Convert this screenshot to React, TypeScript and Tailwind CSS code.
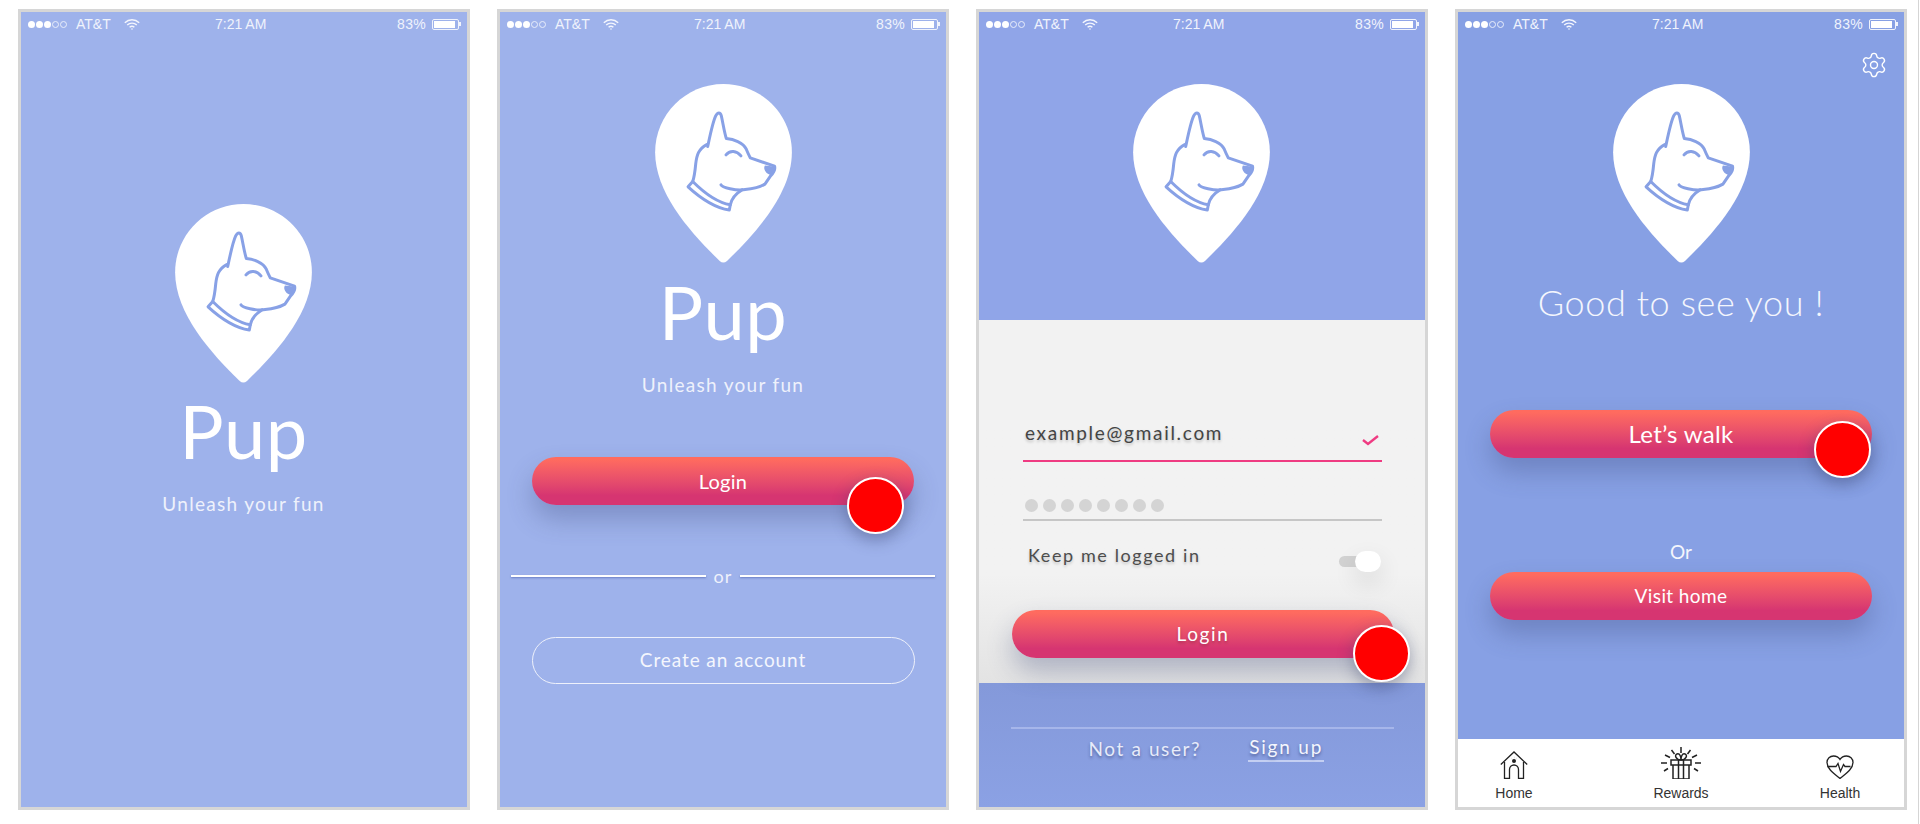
import React from "react";
import { Settings } from "lucide-react";

const Status = () => (
  <div className="flex h-6 shrink-0 items-center text-[14px] text-[#f0f3fc] font-['Liberation_Sans',sans-serif]">
    <div className="ml-[7px] flex w-[40px] gap-px">
      {[1, 1, 1, 0, 0].map((f, i) => (
        <span key={i} className={f ? "h-[7px] w-[7px] rounded-full bg-white" : "h-[7px] w-[7px] rounded-full border border-[#e8edfb]"} />
      ))}
    </div>
    <span className="ml-[8px] w-[48px]">AT&amp;T</span>
    <svg width="16" height="11" viewBox="0 0 16 11" fill="none" stroke="#f4f6fd" strokeWidth="1.4">
      <path d="M.8 3.7C5 -.3 11 -.3 15.2 3.7M3.2 6c2.7-2.5 6.9-2.5 9.6 0M5.6 8.3c1.4-1.2 3.4-1.2 4.8 0" />
      <circle cx="8" cy="10" r=".8" fill="#f4f6fd" stroke="none" />
    </svg>
    <span className="ml-[75px] w-[182px]">7:21 AM</span>
    <span className="w-[35px] tracking-[0.4px]">83%</span>
    <span className="flex h-[11px] w-[27px] items-center rounded-[2px] border border-[#f0f3fc] p-px">
      <span className="h-full w-[21px] bg-white" />
    </span>
    <span className="h-1 w-[2px] bg-[#f0f3fc]" />
  </div>
);

const Pin = ({ color }: { color: string }) => (
  <svg width="137" height="179" viewBox="0 0 411 538" className="shrink-0">
    <path fill="#fff" d="M205.5 0C319 0 411 92 411 205C411 330 300 450 216 532Q205 541 194 532C110 450 0 330 0 205C0 92 92 0 205.5 0Z" />
    <g fill="none" stroke={color} strokeWidth="9" strokeLinecap="round" strokeLinejoin="round">
      <path d="M158 188C165 155 173 115 182 96C188 84 196 84 199 96C204 118 208 145 214 164C235 166 265 175 274 196C278 206 282 214 286 222L359 247C362 258 355 268 347 276L330 301C305 316 280 316 262 318C245 320 202 312 198 303" />
      <path d="M155 182C130 195 125 215 122 240C120 262 118 278 113 293" />
      <path d="M213 213C225 198 245 200 258 216" />
      <path d="M262 318C245 328 230 345 226 363" />
      <path d="M113 293L99 309C135 342 180 372 223 379L226 363C190 357 150 330 113 293Z" />
    </g>
    <path fill={color} d="M330 245L362 249C364 262 352 276 343 272C332 268 324 254 330 245Z" />
  </svg>
);

const Cta = ({ label, cls, text }: { label: string; cls: string; text: string }) => (
  <div className={`flex h-[48px] w-[382px] items-center justify-center rounded-full bg-gradient-to-b from-[#ff6b5f] from-5% to-[#d63571] to-80% text-white shadow-[0_14px_26px_rgba(60,70,120,0.32)] ${cls} ${text}`}>
    {label}
  </div>
);

const Red = ({ cls }: { cls: string }) => (
  <div className={`absolute h-[57px] w-[57px] rounded-full border-2 border-white bg-[#ff0000] shadow-[0_6px_16px_rgba(50,60,100,0.4)] ${cls}`} />
);

const Phone = ({ cls, children }: { cls: string; children: React.ReactNode }) => (
  <div className={`relative flex h-[801px] w-[452px] shrink-0 flex-col overflow-visible border-[3px] border-[#d6d6d6] font-['Lato',sans-serif] ${cls}`}>
    {children}
  </div>
);

const App = () => (
  <div className="relative flex h-[824px] w-[1920px] items-start overflow-hidden bg-white pl-[18px] pt-[9px]">
    <Phone cls="bg-[#9eb2eb]">
      <Status />
      <div className="flex flex-col items-center pr-[1px]">
        <div className="mt-[168px]"><Pin color="#88a1e6" /></div>
        <div className="mt-[3px] text-[74px] font-normal leading-[90px] tracking-[0.5px] text-white">Pup</div>
        <div className="mt-[16px] text-[19px] font-normal leading-[24px] tracking-[1.3px] text-[#eef1fb]">Unleash your fun</div>
      </div>
    </Phone>

    <Phone cls="ml-[27px] bg-[#9eb2eb]">
      <Status />
      <div className="flex flex-col items-center">
        <div className="mt-[48px]"><Pin color="#88a1e6" /></div>
        <div className="mt-[4px] text-[74px] font-normal leading-[90px] tracking-[0.5px] text-white">Pup</div>
        <div className="mt-[16px] text-[19px] font-normal leading-[24px] tracking-[1.3px] text-[#eef1fb]">Unleash your fun</div>
        <div className="relative mt-[60px]">
          <Cta label="Login" cls="" text="text-[20px] tracking-[0.3px]" />
          <Red cls="right-[10px] top-[20px]" />
        </div>
        <div className="mt-[60px] flex w-[425px] items-center justify-between">
          <span className="h-[2px] w-[195px] bg-white shadow-[0_1px_2px_rgba(70,90,170,0.6)]" />
          <span className="text-[18px] leading-[22px] tracking-[1px] text-[#eef1fb]">or</span>
          <span className="h-[2px] w-[195px] bg-white shadow-[0_1px_2px_rgba(70,90,170,0.6)]" />
        </div>
        <div className="mt-[50px] flex h-[47px] w-[383px] items-center justify-center rounded-full border-[1.5px] border-[#eef1fb] text-[19px] tracking-[0.9px] text-[#f4f6fd]">
          Create an account
        </div>
      </div>
    </Phone>

    <Phone cls="ml-[27px] bg-[#8fa5e8]">
      <div className="flex h-[308px] shrink-0 flex-col bg-[#90a5e8]">
        <Status />
        <div className="flex flex-col items-center pr-[2px]">
          <div className="mt-[48px]"><Pin color="#88a1e6" /></div>
        </div>
      </div>
      <div className="relative flex h-[363px] shrink-0 flex-col bg-gradient-to-b from-[#f2f2f2] from-70% to-[#e3e3e3] pl-[44px]">
        <div className="mt-[101px] flex w-[359px] items-end justify-between border-b-2 border-[#ef3b82] pb-[15px] pr-[3px]">
          <span className="ml-[2px] text-[19px] leading-[24px] tracking-[1.7px] text-[#444] [text-shadow:0_2px_3px_rgba(0,0,0,0.22)]">example@gmail.com</span>
          <svg width="17" height="11" viewBox="0 0 17 11" fill="none" stroke="#ef3b82" strokeWidth="2.4" className="mb-[-1px]"><path d="M1 5l5 4 10-8" /></svg>
        </div>
        <div className="mt-[37px] flex w-[359px] gap-[5px] border-b-2 border-[#c6c6c6] pb-[7px] pl-[2px]">
          {[0, 1, 2, 3, 4, 5, 6, 7].map((i) => (
            <span key={i} className="h-[13px] w-[13px] rounded-full bg-[#d4d4d4]" />
          ))}
        </div>
        <div className="mt-[22px] flex w-[359px] items-start justify-between pl-[5px] pr-[1px]">
          <span className="text-[18px] leading-[24px] tracking-[1.6px] text-[#4d4d4d] [text-shadow:0_2px_3px_rgba(0,0,0,0.2)]">Keep me logged in</span>
          <div className="relative mt-[8px] h-[21px] w-[42px]">
            <span className="absolute left-0 top-[5px] h-[11px] w-[34px] rounded-full bg-[#d2d2d2]" />
            <span className="absolute right-0 top-0 h-[21px] w-[26px] rounded-full bg-white shadow-[0_10px_24px_rgba(0,0,0,0.12)]" />
          </div>
        </div>
        <div className="relative mt-[38px] ml-[-11px] w-[382px]">
          <Cta label="Login" cls="shadow-[0_12px_26px_rgba(0,0,0,0.22)]" text="text-[19px] tracking-[1.6px] [text-shadow:0_2px_3px_rgba(0,0,0,0.22)] text-[#fbe3e3]" />
          <Red cls="right-[-16px] top-[15px]" />
        </div>
      </div>
      <div className="flex flex-1 flex-col items-center bg-gradient-to-b from-[#8499da] to-[#8ba1e4]">
        <div className="mt-[44px] h-[2px] w-[383px] bg-[#a6b6ea]" />
        <div className="mt-[6px] flex w-[383px] items-start pl-[78px]">
          <span className="mt-[2px] text-[19px] leading-[24px] tracking-[1.6px] text-[#e7ebf9] [text-shadow:0_2px_3px_rgba(30,40,90,0.45)]">Not a user?</span>
          <span className="ml-[47px] border-b-2 border-[#c4cff2] px-[1px] pb-[1px] text-[19px] leading-[24px] tracking-[1.8px] text-[#f4f6fd] [text-shadow:0_2px_3px_rgba(30,40,90,0.5)]">Sign up</span>
        </div>
      </div>
    </Phone>

    <Phone cls="ml-[27px] bg-[#87a0e4]">
      <Status />
      <Settings size={28} strokeWidth={1.2} color="#fff" className="absolute right-[16px] top-[39px]" />
      <div className="flex flex-col items-center">
        <div className="mt-[48px]"><Pin color="#87a0e4" /></div>
        <div className="mt-[15px] text-[36px] font-light leading-[48px] tracking-[0.6px] text-[#f4f6fd]">Good to see you !</div>
        <div className="relative mt-[84px]">
          <Cta label="Let’s walk" cls="" text="text-[24px] tracking-[0.3px]" />
          <Red cls="right-[1px] top-[11px]" />
        </div>
        <div className="mt-[81px] text-[19px] leading-[26px] text-[#f4f6fd]">Or</div>
        <Cta label="Visit home" cls="mt-[7px]" text="text-[19px] tracking-[0.4px]" />
      </div>
      <div className="mt-auto flex h-[68px] items-start bg-white pl-[26px] pt-[8px] text-[14px] leading-[16px] text-[#333] font-['Liberation_Sans',sans-serif]">
        <div className="flex w-[60px] flex-col items-center gap-[6px]">
          <svg width="28" height="32" viewBox="0 0 28 32" fill="none" stroke="#222" strokeWidth="1.3">
            <path d="M.8 17.5L14 5l13.2 12.5" />
            <path d="M4.5 15v17h5v-9.5a4.5 4.5 0 0 1 9 0V32h5V15" />
            <path d="M4.5 31.4h5M18.5 31.4h5" />
            <circle cx="14" cy="14" r="2" fill="#222" stroke="none" />
            <path d="M11.5 11.5h.1M14 10.5h.1M16.5 11.5h.1" />
          </svg>
          <span>Home</span>
        </div>
        <div className="ml-[107px] flex w-[60px] flex-col items-center gap-[6px]">
          <svg width="40" height="32" viewBox="0 0 40 32" fill="none" stroke="#222" strokeWidth="1.5">
            <path d="M20 0v6M10.5 3l3 4M29.5 3l-3 4M4 8l5 2.5M36 8l-5 2.5M0 16h6M34 16h6M3 24l4-2.5M37 24l-4-2.5" />
            <path d="M10 13h20v5H10zM12 18v14h16V18M17.5 13v19M22.5 13v19" />
            <path d="M20 13c-5 0-7-5-4-6s4 3 4 6c0-3 1-7 4-6s1 6-4 6z" />
          </svg>
          <span>Rewards</span>
        </div>
        <div className="ml-[99px] flex w-[60px] flex-col items-center gap-[6px]">
          <svg width="28" height="32" viewBox="0 0 28 32" fill="none" stroke="#222" strokeWidth="1.3">
            <path d="M14 31.5C8.5 27 1 22 1 15.5C1 11.5 4 9 7.5 9C10.5 9 12.8 10.5 14 12.5C15.2 10.5 17.5 9 20.5 9C24 9 27 11.5 27 15.5C27 22 19.5 27 14 31.5Z" />
            <path d="M1.5 19.5H10l2-3 2.5 8 3-7 1.5 2h5.5" />
          </svg>
          <span>Health</span>
        </div>
      </div>
    </Phone>

    <div className="absolute bottom-0 right-[1px] top-0 w-[1px] bg-[#d5d5d5]" />
  </div>
);

export default App;
